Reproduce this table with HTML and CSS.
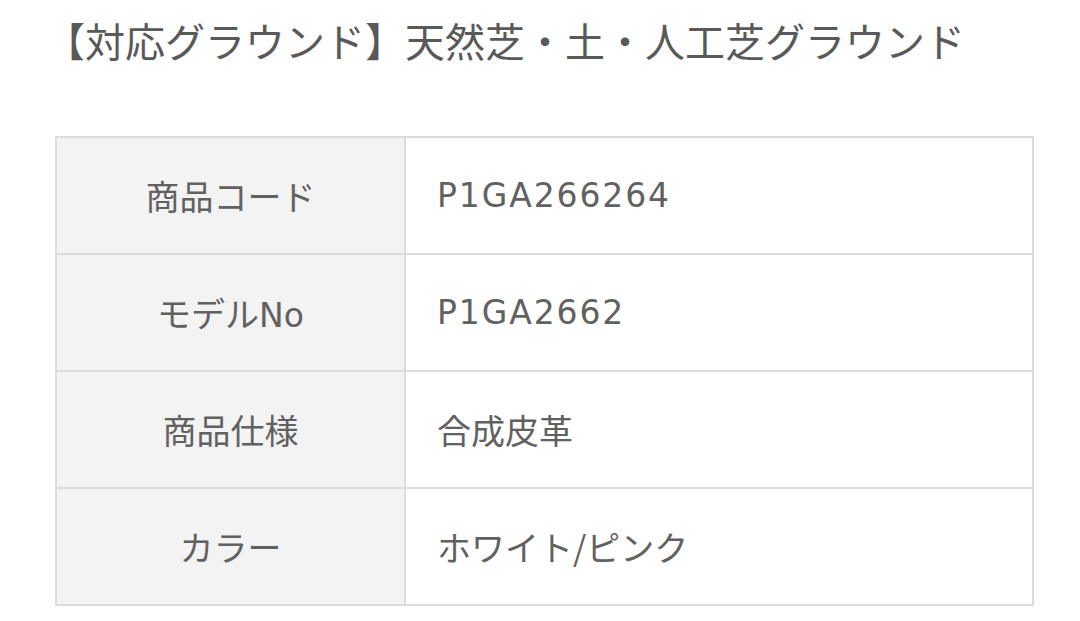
FILE: index.html
```html
<!DOCTYPE html>
<html lang="ja">
<head>
<meta charset="utf-8">
<title>商品情報</title>
<link rel="stylesheet" href="styles.css">
</head>
<body>
<div class="page">
  <h1 class="ground">【対応グラウンド】天然芝・土・人工芝グラウンド</h1>
  <table class="spec">
    <tbody>
      <tr><th>商品コード</th><td class="code">P1GA266264</td></tr>
      <tr><th>モデル<span class="latin">No</span></th><td class="code">P1GA2662</td></tr>
      <tr><th>商品仕様</th><td>合成皮革</td></tr>
      <tr><th>カラー</th><td>ホワイト/ピンク</td></tr>
    </tbody>
  </table>
</div>
</body>
</html>
```
FILE: styles.css
```css
html, body {
  margin: 0;
  padding: 0;
  background: #ffffff;
}
body {
  font-family: "Noto Sans CJK JP", "Noto Sans", sans-serif;
  color: #5f5f5f;
}
.page {
  padding: 10px 0 0 55px;
}
.ground {
  margin: 0 0 66px -10px;
  font-size: 40px;
  line-height: 60px;
  font-weight: 400;
  color: #595959;
  white-space: nowrap;
}
.spec {
  border-collapse: separate;
  border-spacing: 2px;
  background: #dcdcdc;
  width: 979px;
  font-size: 34px;
  color: #616161;
}
.spec th,
.spec td {
  height: 115px;
  padding: 0;
  font-weight: 400;
  vertical-align: middle;
}
.spec th {
  width: 347px;
  background: #f3f3f3;
  text-align: center;
}
.spec td {
  background: #ffffff;
  text-align: left;
  padding-left: 31px;
}
.spec .code {
  font-family: "DejaVu Sans", "Noto Sans CJK JP", sans-serif;
  font-size: 33px;
  letter-spacing: 1.9px;
}
.spec .latin {
  font-family: "DejaVu Sans", "Noto Sans CJK JP", sans-serif;
  font-size: 33px;
}
```
